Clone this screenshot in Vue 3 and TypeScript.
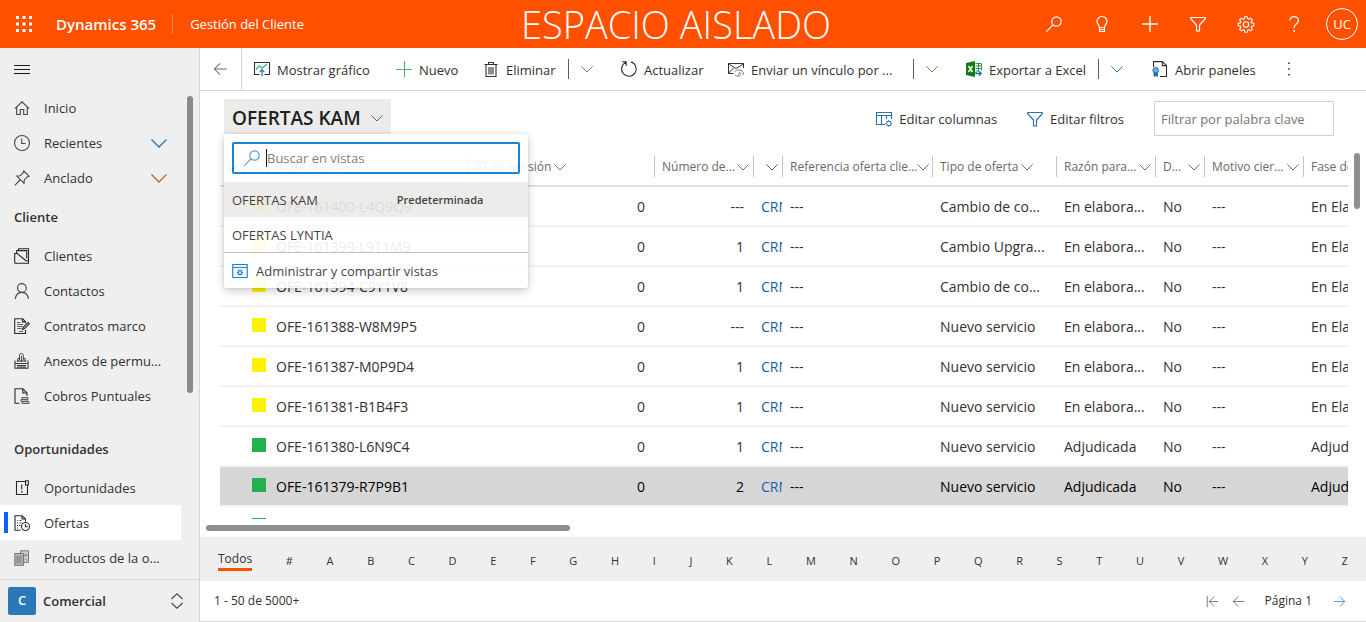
<script setup lang="ts">
import { h, ref } from 'vue'

interface Shape { d: string; stroke?: string; fill?: string; w?: number }

const line = (d: string, stroke = 'currentColor', w = 1): Shape => ({ d, stroke, w })
const solid = (d: string, fill = 'currentColor'): Shape => ({ d, fill })

// All glyphs are drawn on a 16 x 16 canvas.
const icons: Record<string, Shape[]> = {
  waffle: [solid('M0 0h3v3H0zM6.5 0h3v3h-3zM13 0h3v3h-3zM0 6.5h3v3H0zM6.5 6.5h3v3h-3zM13 6.5h3v3h-3zM0 13h3v3H0zM6.5 13h3v3h-3zM13 13h3v3h-3z')],
  search: [line('M15.2 5.5a4.7 4.7 0 1 1-9.4 0a4.7 4.7 0 1 1 9.4 0M7 8.9L.4 15.6', 'currentColor', 1.2)],
  bulb: [line('M5.5 11.5C5.5 8.9 3 8.4 3 5.5a5 5 0 0 1 10 0c0 2.9-2.5 3.4-2.5 6zM5.5 11.5v4h5v-4M5.5 13.5h5', 'currentColor', 1.2)],
  plus: [line('M8 0v16M0 8h16', 'currentColor', 1.3)],
  plusGreen: [line('M8.5 0v16M0 8.5h16', '#4cb878', 1.2)],
  funnel: [line('M.7 1.5h14.6v1.2L9.5 9v6h-3V9L.7 2.7z', 'currentColor', 1.2)],
  gear: [
    line('M6.8.7h2.4l.4 2 1.3.6 1.8-1.2 1.7 1.7-1.2 1.8.6 1.3 2 .4v2.4l-2 .4-.6 1.3 1.2 1.8-1.7 1.7-1.8-1.2-1.3.6-.4 2H6.8l-.4-2-1.3-.6-1.8 1.2-1.7-1.7 1.2-1.8-.6-1.3-2-.4V7.3l2-.4.6-1.3-1.2-1.8 1.7-1.7 1.8 1.2 1.3-.6z', 'currentColor', 1.1),
    line('M10.7 8.5a2.7 2.7 0 1 1-5.4 0a2.7 2.7 0 1 1 5.4 0', 'currentColor', 1.1),
  ],
  help: [line('M3.8 4.6C3.8 2 5.6.7 8.1.7s4.3 1.5 4.3 3.9c0 3.3-4.2 3.4-4.2 6.9v.7', 'currentColor', 1.2), solid('M7.4 14h1.6v1.7H7.4z')],
  menu: [line('M0 3.5h16M0 7.5h16M0 11.5h16', '#1b1a19', 1)],
  back: [line('M15 8H1.5M7.5 2L1.5 8l6 6', '#69727e', 1.1)],
  forward: [line('M1 8h13.5M8.5 2l6 6-6 6', '#4a8fbd', 1.1)],
  first: [line('M1.5 1v14M15 8H4M10 2L4 8l6 6', '#69727e', 1.1)],
  chart: [
    line('M5.5 13.5h-5v-12h15v12h-5', '#323130', 1.1),
    line('M2 8.5l3.5-3.6 2.4 2.5L13 3', '#38a867', 1.1),
    line('M8 15.5V8.8M5.7 11L8 8.7 10.3 11', '#1b6fb8', 1.1),
  ],
  trash: [line('M1.5 3.5h13M5.5 3.5v-2h5v2M3 3.5v12h10v-12M6 6v7.5M8 6v7.5M10 6v7.5', '#323130', 1.1)],
  refresh: [line('M1 .8h4.200v4.200M10 .9A7.300 7.300 0 1 1 5 1.200', '#323130', 1.1)],
  mail: [
    line('M5.500 12.500H.5v-10h15V7M.5 3l7.5 4.500 7.500-4.500M.5 12.300L5.500 7', '#323130', 1),
    line('M6.500 10.800c2-2.300 6.500-2.600 8.500.2.800 1.300.600 2.700-.400 3.300M7 13.800c1.800 1.800 4.800 1.800 5.800 0 .7-1.500-.5-2.500-1.600-2.100-1.100.5-1 1.800-.2 2', '#797775', 1),
  ],
  excel: [
    solid('M0 2l9-2v16l-9-2z', '#107c10'),
    line('M9.500 2.500h6v7M9.500 5h6M9.500 7.500h6M12.500 2.500v8M9.500 10h3.500', '#2f9a44', 1),
    line('M2.500 5l4 6M6.500 5l-4 6', '#fff', 1.4),
    line('M10 11v1.500h5M13 10.300l2.200 2.200-2.200 2.300', '#1b6fb8', 1.300),
  ],
  panel: [
    line('M1.500 6V.6h8.800L14.500 4.500v11H8M10.300.6v4h4.200', '#323130', 1.1),
    { d: 'M6.500 9.300a2.800 2.800 0 1 1-5.600 0a2.800 2.800 0 1 1 5.600 0', stroke: '#1b6fb8', fill: '#6faee0', w: 1 },
    { d: 'M2 12v3.500l1.700-1 1.700 1V12z', stroke: '#1b6fb8', fill: '#1b6fb8', w: 1 },
  ],
  columns: [
    line('M9 13.500H.5v-12h15V8M.5 4.500h15M5.500 4.500v9M10.500 4.500V8', '#2b72ac', 1.1),
    line('M15 12.500a2.200 2.200 0 1 1-4.400 0a2.200 2.200 0 1 1 4.400 0M12.800 9v1.300M12.800 14.700V16M9.300 12.500h1.300M15 12.500h1M10.400 10.100l.8.800M15.200 10.100l-.8.800M10.400 14.900l.8-.8M15.200 14.900l-.8-.8', '#2b72ac', 1),
  ],
  home: [line('M1 8.700L8 1.800l7 6.900M2.700 7.200v7.300h3.600V9.500h3.400v5h3.600V7.200', '#484644', 1.1)],
  clock: [line('M15.500 8a7.500 7.500 0 1 1-15 0a7.500 7.500 0 1 1 15 0M7.700 3.500v5h3.800', '#484644', 1.1)],
  pin: [line('M9.800 1l5.200 5.200-1.500.5-3.200 3.200-.3 3.400-7.300-7.300 3.500-.3 3.200-3.200zM6 10L.8 15.300', '#484644', 1.1)],
  folder: [line('M.7 15.300V5.500h2.500L8 9.500l4 3.200h2.500M.7 15.300h13.800v-4M2.700 5.500V2.600h10v8M4.500 2.600V.8h10v11', '#292827', 1.1)],
  person: [line('M12.300 5a4.400 4.400 0 1 1-8.800 0a4.400 4.400 0 1 1 8.800 0M1.300 16c.5-4 3.200-6.600 6.600-6.600s6.100 2.600 6.600 6.600', '#484644', 1.1)],
  contract: [
    line('M11.500 12v3.500H.7V.7h8l2.800 3v1.500M8.500.7v3.200h3', '#292827', 1.1),
    line('M3 4.500h3.500M3 6.500h6M3 8.500h5.500M3 10.500h4.500M5 13.500h4', '#605e5c', 1),
    { d: 'M8.200 11.800l1-2.800 4.800-4.700 1.600 1.500-4.800 4.900z', stroke: '#292827', fill: '#8a8886', w: 1 },
  ],
  annex: [
    line('M5.500 7V1.800a2 2 0 0 1 3.800 0V7M7.400 3v6M5.500 5.500H3.800V9M9.300 5.500h1.900V9', '#484644', 1),
    line('M1 7.500v7.700h13V7.500M2.700 8h9.600M1 10.500h13M3 12.500h9M3 14h9', '#3b3a39', 1.1),
  ],
  invoice: [
    line('M5.500 15.300H1V.7h7.800L13 5v3M8.800.7V5H13', '#292827', 1.1),
    { d: 'M8 9.500h6v2H8zM7 11.500h6v2H7zM8 13.500h7v2H8z', stroke: '#605e5c', fill: '#c8c6c4', w: 1 },
  ],
  opportunity: [line('M11.500 1.500H2.500v13h11V5M11.500.8h2.800V5h-2.800zM7.700 4.500v5', '#292827', 1.1), solid('M7 11h1.400v1.400H7z', '#292827')],
  offer: [
    line('M6.500 15.300H1V.7h7L11.500 4v2.500M8 .7V4h3.500', '#292827', 1.1),
    line('M3 5.500h1M5.500 5.500h2M3 8h1M5.500 8h2M3 10.500h1M5 10.500h1.200M3 13h1', '#484644', 1.1),
    line('M15.500 11.500a4 4 0 1 1-8 0a4 4 0 1 1 8 0M11.500 9v2.700h2.200', '#292827', 1.1),
  ],
  product: [
    { d: 'M.8 3.500h8.700v11.800H.8z', stroke: '#797775', fill: '#bdbbb9', w: 1.1 },
    { d: 'M6.500.800h8v11.500h-5V3.500h-3z', stroke: '#797775', fill: '#d0cecc', w: 1 },
    line('M3 5.500v8M5 5.500v8M7 5.500v8M11 4v2.500M12.800 4v2.500M11 8.500l1.800 2', '#797775', 1),
  ],
  views: [
    line('M.8 1.500h14.400v13H.8zM.8 4.500h14.400', '#0078d4', 1.200),
    line('M9.700 9.500a1.700 1.700 0 1 1-3.400 0a1.700 1.700 0 1 1 3.400 0M8 6.200v1.600M8 11.200v1.600M4.700 9.500h1.600M9.700 9.500h1.600M5.700 7.200l1.100 1.100M10.300 7.200l-1.100 1.100M5.700 11.800l1.100-1.100M10.300 11.800l-1.100-1.100', '#0078d4', 1.100),
  ],
  more: [solid('M7.200 1.500h1.600v1.600H7.200zM7.200 7.200h1.600v1.600H7.200zM7.200 12.900h1.600v1.600H7.200z', '#323130')],
  updown: [line('M2.500 6L8 .8 13.500 6M2.500 10L8 15.200 13.500 10', '#484644', 1.1)],
  chevron: [line('M.5 4.500L8 12l7.500-7.500', 'currentColor', 1.3)],
  check: [line('M1 8.500l4.500 4.500L15 3', '#605e5c', 2)],
}

const Icon = (props: { name: string }) =>
  h('svg', { viewBox: '0 0 16 16', class: 'icon', 'aria-hidden': 'true' },
    icons[props.name].map(s => h('path', { d: s.d, fill: s.fill ?? 'none', stroke: s.stroke ?? 'none', 'stroke-width': s.w })))
Icon.props = ['name']

interface NavItem { label: string; icon: string; expand?: string; active?: boolean }
const nav: { title?: string; items: NavItem[] }[] = [
  { items: [
    { label: 'Inicio', icon: 'home' },
    { label: 'Recientes', icon: 'clock', expand: 'blue' },
    { label: 'Anclado', icon: 'pin', expand: 'brown' },
  ] },
  { title: 'Cliente', items: [
    { label: 'Clientes', icon: 'folder' },
    { label: 'Contactos', icon: 'person' },
    { label: 'Contratos marco', icon: 'contract' },
    { label: 'Anexos de permu...', icon: 'annex' },
    { label: 'Cobros Puntuales', icon: 'invoice' },
  ] },
  { title: 'Oportunidades', items: [
    { label: 'Oportunidades', icon: 'opportunity' },
    { label: 'Ofertas', icon: 'offer', active: true },
    { label: 'Productos de la o...', icon: 'product' },
  ] },
]

const tools = [
  { label: 'Búsqueda', icon: 'search' }, { label: 'Ideas', icon: 'bulb' }, { label: 'Crear', icon: 'plus' },
  { label: 'Filtro', icon: 'funnel' }, { label: 'Configuración', icon: 'gear' }, { label: 'Ayuda', icon: 'help' },
]

interface Command { label: string; icon: string; split?: string }
const commands: Command[] = [
  { label: 'Mostrar gráfico', icon: 'chart' },
  { label: 'Nuevo', icon: 'plusGreen' },
  { label: 'Eliminar', icon: 'trash', split: 'grey' },
  { label: 'Actualizar', icon: 'refresh' },
  { label: 'Enviar un vínculo por ...', icon: 'mail', split: 'brown' },
  { label: 'Exportar a Excel', icon: 'excel', split: 'blue' },
  { label: 'Abrir paneles', icon: 'panel' },
]

const columns = [
  { key: 'mark', label: '', chevron: '' },
  { key: 'color', label: '', chevron: 'grey' },
  { key: 'id', label: 'ID de oferta', chevron: 'grey' },
  { key: 'revision', label: 'ID de revisión', chevron: 'grey' },
  { key: 'number', label: 'Número de...', chevron: 'end' },
  { key: 'crm', label: '', chevron: 'end' },
  { key: 'reference', label: 'Referencia oferta clie...', chevron: 'end' },
  { key: 'type', label: 'Tipo de oferta', chevron: 'grey' },
  { key: 'reason', label: 'Razón para...', chevron: 'end' },
  { key: 'flag', label: 'D...', chevron: 'end' },
  { key: 'motive', label: 'Motivo cier...', chevron: 'end' },
  { key: 'phase', label: 'Fase de oferta', chevron: '' },
]

const row = (id: string, number: string, type: string, won = false, selected = false) => ({
  id, number, type, won, selected,
  reason: won ? 'Adjudicada' : 'En elabora...',
  phase: won ? 'Adjudicada' : 'En Elaboración',
})
const rows = [
  row('OFE-161400-L4Q9Q9', '---', 'Cambio de co...'),
  row('OFE-161399-L9T1M9', '1', 'Cambio Upgra...'),
  row('OFE-161394-C9Y1V8', '1', 'Cambio de co...'),
  row('OFE-161388-W8M9P5', '---', 'Nuevo servicio'),
  row('OFE-161387-M0P9D4', '1', 'Nuevo servicio'),
  row('OFE-161381-B1B4F3', '1', 'Nuevo servicio'),
  row('OFE-161380-L6N9C4', '1', 'Nuevo servicio', true),
  row('OFE-161379-R7P9B1', '2', 'Nuevo servicio', true, true),
]

const letters = ['#', ...'ABCDEFGHIJKLMNOPQRSTUVWXYZ']
const viewSearch = ref('')
const keyword = ref('')
</script>

<template>
  <div class="app">
    <header class="topbar">
      <div class="brand">
        <button class="plain waffle" aria-label="Aplicaciones"><Icon name="waffle" /></button>
        <a class="product" href="#">Dynamics 365</a>
        <a class="module" href="#">Gestión del Cliente</a>
      </div>
      <div class="environment">ESPACIO AISLADO</div>
      <div class="tools">
        <button v-for="t in tools" :key="t.label" class="plain tool" :aria-label="t.label"><Icon :name="t.icon" /></button>
        <button class="plain avatar" aria-label="Cuenta">UC</button>
      </div>
    </header>

    <div class="body">
      <aside class="sidebar">
        <button class="plain burger" aria-label="Menú"><Icon name="menu" /></button>
        <nav class="nav">
          <section v-for="(g, i) in nav" :key="i" class="group">
            <h2 v-if="g.title" class="group-title">{{ g.title }}</h2>
            <a v-for="n in g.items" :key="n.label" href="#" class="nav-item" :class="{ active: n.active }">
              <Icon :name="n.icon" />
              <span class="nav-label">{{ n.label }}</span>
              <Icon v-if="n.expand" name="chevron" class="expand" :class="n.expand" />
            </a>
          </section>
          <div class="nav-thumb"></div>
        </nav>
        <button class="plain area">
          <span class="area-badge">C</span>
          <span class="area-name">Comercial</span>
          <Icon name="updown" />
        </button>
      </aside>

      <main class="main">
        <div class="commands">
          <button class="plain back" aria-label="Atrás"><Icon name="back" /></button>
          <template v-for="c in commands" :key="c.label">
            <button class="plain command"><Icon :name="c.icon" /><span>{{ c.label }}</span></button>
            <button v-if="c.split" class="plain split" :class="c.split" :aria-label="'Más: ' + c.label"><Icon name="chevron" /></button>
          </template>
          <button class="plain more" aria-label="Más comandos"><Icon name="more" /></button>
        </div>

        <div class="viewbar">
          <div class="view">
            <button class="plain view-button" aria-expanded="true">OFERTAS KAM<Icon name="chevron" /></button>
            <div class="view-menu">
              <label class="view-search">
                <Icon name="search" />
                <span class="caret"></span>
                <input v-model="viewSearch" type="text" placeholder="Buscar en vistas" aria-label="Buscar en vistas">
              </label>
              <button class="plain view-option current">OFERTAS KAM<strong>Predeterminada</strong></button>
              <button class="plain view-option">OFERTAS LYNTIA</button>
              <button class="plain view-option manage"><Icon name="views" />Administrar y compartir vistas</button>
            </div>
          </div>
          <div class="view-actions">
            <button class="plain command"><Icon name="columns" /><span>Editar columnas</span></button>
            <button class="plain command"><Icon name="funnel" class="blue" /><span>Editar filtros</span></button>
            <input v-model="keyword" class="keyword" type="text" placeholder="Filtrar por palabra clave" aria-label="Filtrar por palabra clave">
          </div>
        </div>

        <div class="grid-area">
          <div class="grid-clip">
            <table class="grid">
              <colgroup><col v-for="c in columns" :key="c.key" :class="'col-' + c.key"></colgroup>
              <thead>
                <tr>
                  <th v-for="c in columns" :key="c.key" scope="col">
                    <div class="head" :class="['head-' + c.key, { end: c.chevron === 'end' }]">
                      <Icon v-if="c.key === 'mark'" name="check" />
                      <span v-if="c.label">{{ c.label }}</span>
                      <Icon v-if="c.chevron" name="chevron" />
                    </div>
                  </th>
                </tr>
              </thead>
              <tbody>
                <tr v-for="r in rows" :key="r.id" :class="{ selected: r.selected }">
                  <td></td>
                  <td><span class="swatch" :class="{ won: r.won }"></span></td>
                  <td>{{ r.id }}</td>
                  <td class="num">0</td>
                  <td class="num">{{ r.number }}</td>
                  <td class="crm"><a href="#">CRM</a></td>
                  <td>---</td>
                  <td>{{ r.type }}</td>
                  <td>{{ r.reason }}</td>
                  <td>No</td>
                  <td>---</td>
                  <td>{{ r.phase }}</td>
                </tr>
                <tr>
                  <td></td>
                  <td><span class="swatch won"></span></td>
                  <td colspan="10"></td>
                </tr>
              </tbody>
            </table>
          </div>
          <div class="v-track"><div class="v-thumb"></div></div>
        </div>
        <div class="h-track"><div class="h-thumb"></div></div>

        <div class="jumpbar">
          <button class="plain jump all">Todos</button>
          <button v-for="l in letters" :key="l" class="plain jump">{{ l }}</button>
        </div>

        <footer class="status">
          <span>1 - 50 de 5000+</span>
          <div class="pager">
            <button class="plain" aria-label="Primera página"><Icon name="first" /></button>
            <button class="plain" aria-label="Página anterior"><Icon name="back" /></button>
            <span>Página 1</span>
            <button class="plain" aria-label="Página siguiente"><Icon name="forward" /></button>
          </div>
        </footer>
      </main>
    </div>
  </div>
</template>

<style>
html, body { margin: 0; overflow: hidden; }
</style>

<style scoped>
.app, .app * { box-sizing: border-box; }
.app {
  display: flex;
  flex-direction: column;
  height: 100vh;
  background: #fff;
  color: #323130;
  font: 13px/20px "Open Sans", "Noto Sans", sans-serif;
}
.plain {
  display: flex;
  align-items: center;
  padding: 0;
  border: 0;
  background: none;
  color: inherit;
  font: inherit;
  white-space: nowrap;
  cursor: pointer;
}
a { color: inherit; text-decoration: none; }
.icon { flex: none; width: 16px; height: 16px; overflow: visible; }
.blue { color: #2b72ac; }
.brown { color: #a86b32; }

.topbar {
  flex: none;
  display: grid;
  grid-template-columns: 1fr auto 1fr;
  align-items: center;
  height: 48px;
  padding: 0 8px;
  background: #ff5000;
  color: #fff;
}
.brand { display: flex; align-items: center; padding-left: 8px; }
.product { margin-left: 24px; padding-right: 16px; border-right: 1px solid #ff8a54; font-size: 15px; font-weight: 600; }
.module { margin-left: 17px; }
.environment { padding-right: 14px; font-size: 38px; font-weight: 300; line-height: 48px; }
.tools { display: flex; align-items: center; justify-content: flex-end; }
.tool { margin-right: 32px; }
.tool:nth-last-child(2) { margin-right: 24px; }
.avatar { justify-content: center; width: 32px; height: 32px; border: 1px solid #fff; border-radius: 50%; }

.body { flex: 1; display: flex; min-height: 0; }
.sidebar {
  flex: none;
  display: flex;
  flex-direction: column;
  width: 200px;
  border-right: 1px solid #d6d6d6;
  background: #efefef;
}
.burger { flex: none; height: 42px; padding: 2px 0 0 14px; }
.nav { position: relative; flex: 1; min-height: 0; overflow: hidden; }
.nav-thumb { position: absolute; top: 6px; right: 6px; width: 6px; height: 297px; border-radius: 3px; background: #8a8a8a; }
.group + .group + .group { margin-top: 14px; }
.group-title { height: 43px; margin: 0; padding: 2px 0 0 14px; font-size: 13px; font-weight: 600; line-height: 41px; }
.nav-item { position: relative; display: flex; align-items: center; height: 35px; margin-right: 18px; padding: 0 14px; }
.nav-label { flex: 1; margin-left: 14px; white-space: nowrap; }
.nav-item.active { background: #fff; }
.nav-item.active::before { content: ""; position: absolute; left: 4px; top: 7px; width: 4px; height: 21px; background: #0b62ff; }
.area { flex: none; height: 43px; padding: 0 14px 0 8px; border-top: 1px solid #d6d6d6; font-weight: 600; }
.area-badge { width: 28px; height: 28px; border-radius: 2px; background: #2b78b8; color: #fff; line-height: 26px; text-align: center; }
.area-name { flex: 1; margin-left: 7px; text-align: left; }

.main { flex: 1; display: flex; flex-direction: column; min-width: 0; border-bottom: 1px solid #d6d6d6; }
.commands {
  flex: none;
  display: grid;
  grid-template-columns: 54px 142px 87px 85px 53px 107px 185px 53px 132px 54px 129px 16px;
  height: 43px;
  border-bottom: 1px solid #d6d6d6;
}
.back { justify-content: center; width: 42px; border-right: 1px solid #d6d6d6; }
.back .icon { width: 15px; }
.command > span { margin-left: 7px; }
.commands .command > span { padding-top: 1px; }
.split::before { content: ""; width: 1px; height: 20px; margin-right: 12px; background: #605e5c; }
.split .icon { width: 12px; height: 12px; }
.split.grey { color: #797775; }

.viewbar { flex: none; display: flex; align-items: flex-start; justify-content: space-between; padding: 8px 32px 0 24px; }
.view { position: relative; }
.view-button { height: 35px; padding: 3px 8px 0; background: #edebe9; color: #201f1e; font-size: 19px; font-weight: 600; line-height: 32px; }
.view-button .icon { width: 12px; height: 12px; margin-left: 10px; color: #2b72ac; }
.view-menu {
  position: absolute;
  z-index: 2;
  top: 35px;
  left: 0;
  width: 304px;
  padding-top: 8px;
  border-radius: 2px;
  background: #fff;
  box-shadow: 0 3px 8px rgba(0, 0, 0, .22), 0 0 2px rgba(0, 0, 0, .14);
  opacity: .91;
}
.view-search { display: flex; align-items: center; height: 32px; margin: 0 8px 8px; padding-left: 10px; border: 2px solid #0078d4; border-radius: 2px; }
.view-search .icon { color: #3f97dc; }
.caret { width: 1px; height: 18px; margin-left: 6px; background: #000; }
.view-search input { flex: 1; min-width: 0; padding: 0; border: 0; outline: 0; background: none; color: inherit; font: inherit; }
input::placeholder { color: #767472; opacity: 1; }
.view-option { width: 100%; height: 35px; padding: 0 8px; }
.view-option strong { margin-left: 79px; font-size: 11px; font-weight: 600; }
.view-option.current { background: #edebe9; }
.view-option.manage { height: 36px; border-top: 1px solid #bebbb8; }
.manage .icon { margin-right: 8px; }
.view-actions { display: flex; align-items: center; gap: 30px; padding-top: 2px; }
.keyword { width: 180px; height: 35px; padding: 0 6px; border: 1px solid #d2d0ce; border-radius: 0; outline: 0; background: #fff; color: inherit; font: inherit; }

.grid-area { flex: 1; display: flex; min-height: 0; margin-top: 12px; padding-left: 20px; }
.grid-clip { flex: 1; min-width: 0; overflow: hidden; }
.v-track { flex: none; width: 18px; padding: 5px 6px; }
.v-thumb { height: 56px; border-radius: 3px; background: #8f8f8f; }
.h-track { flex: none; padding: 6px; }
.h-thumb { width: 364px; height: 6px; border-radius: 3px; background: #8f8f8f; }

.grid { width: 1203px; table-layout: fixed; border-collapse: separate; border-spacing: 0; }
.col-mark, .col-color { width: 24px; }
.col-id { width: 199px; }
.col-revision { width: 187px; }
.col-number, .col-reason, .col-motive { width: 99px; }
.col-crm { width: 29px; }
.col-reference { width: 150px; }
.col-type { width: 124px; }
.col-flag { width: 49px; }
.col-phase { width: 120px; }
th { height: 39px; padding: 0; border-bottom: 2px solid #dedede; color: #6b6967; font-size: 12px; font-weight: 400; }
.head { display: flex; align-items: center; gap: 3px; height: 21px; padding: 0 4px 0 7px; border-left: 1px solid #c8c6c4; white-space: nowrap; }
.head-mark { border-left: 0; }
.head.end { justify-content: space-between; gap: 0; }
.head.head-crm { justify-content: flex-end; }
.head .icon { width: 12px; height: 12px; }
td { height: 40px; padding: 2px 8px 0; overflow: hidden; border-bottom: 2px solid #f3f2f1; font-size: 14px; white-space: nowrap; text-overflow: clip; }
.num { padding-right: 9px; text-align: right; }
.crm { padding-right: 0; color: #1160a8; }
.swatch { display: block; width: 14px; height: 14px; margin: -4px 0 0; background: #fff200; }
.swatch.won { background: #22b14c; }
.selected td { background: #d6d6d6; background-clip: padding-box; color: #000; }
.selected .crm { color: #1160a8; }

.jumpbar { flex: none; display: flex; align-items: center; justify-content: space-between; height: 44px; padding: 3px 18px 0; background: #efefef; font-size: 11px; }
.jump.all { height: 20px; border-bottom: 3px solid #ff5000; font-size: 12px; line-height: 16px; }
.status { flex: none; display: flex; align-items: center; justify-content: space-between; height: 40px; padding: 0 20px 0 14px; font-size: 12px; }
.pager { display: flex; align-items: center; }
.pager .icon { width: 13px; height: 13px; }
.pager button + button { margin-left: 13px; }
.pager span { margin: 0 21px 0 20px; }
</style>
